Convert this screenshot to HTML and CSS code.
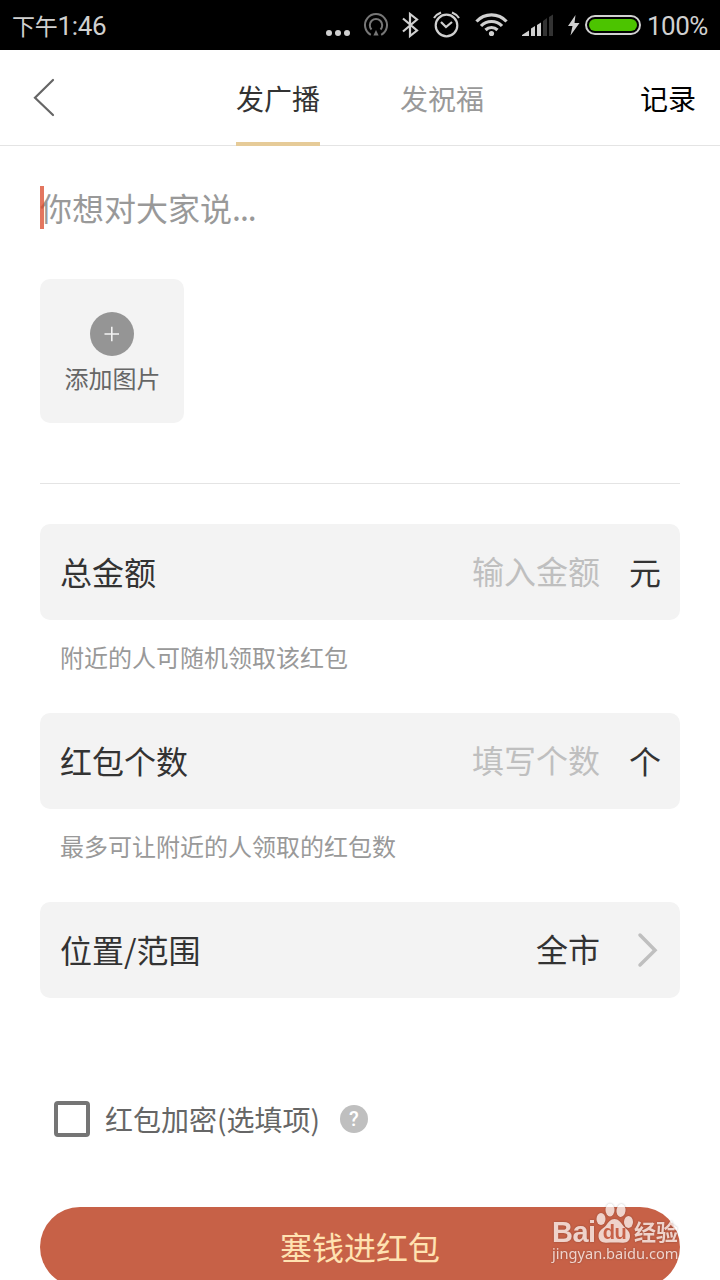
FILE: index.html
```
<!DOCTYPE html>
<html lang="zh-CN">
<head>
    <meta charset="UTF-8">
    <meta name="viewport" content="width=device-width, initial-scale=1.0">
    <title>发广播</title>
    <link rel="stylesheet" href="styles.css">
</head>
<body>
    <div class="status-bar">
        <div class="time"><span class="period">下午</span>1:46</div>
        <svg class="status-icons" width="262" height="50" viewBox="320 0 262 50">
            <g fill="#d0d0d0">
                <circle cx="329" cy="33" r="3"/>
                <circle cx="338" cy="33" r="3"/>
                <circle cx="347" cy="33" r="3"/>
            </g>
            <!-- hotspot -->
            <g fill="none" stroke="#777" stroke-width="2">
                <path d="M370.800 34.800A11 11 0 1 1 381.200 34.800"/>
                <path d="M371.500 29.500A6.200 6.200 0 1 1 380.500 29.500"/>
                <path d="M376 30l2.600 5.500h-5.200z" fill="#777" stroke="none"/>
            </g>
            <!-- bluetooth -->
            <path d="M403 18.500l14 12-7 5.500V14l7 5.500L403 31.500" fill="none" stroke="#d0d0d0" stroke-width="2.200"/>
            <!-- alarm -->
            <g fill="none" stroke="#d0d0d0" stroke-width="2.200">
                <circle cx="446.500" cy="25.500" r="10.800"/>
                <path d="M441 22l5 5 6-5"/>
                <path d="M434 18a15 15 0 0 1 7-5.500M459 18a15 15 0 0 0-7-5.500"/>
            </g>
            <!-- wifi -->
            <g fill="none" stroke="#d0d0d0" stroke-width="3.200">
                <path d="M476.500 21.500a20.500 20.500 0 0 1 30 0"/>
                <path d="M481 26a14.500 14.500 0 0 1 21 0"/>
                <path d="M485.500 30a8.500 8.500 0 0 1 12 0"/>
                <circle cx="491.500" cy="33.500" r="2.600" fill="#d0d0d0" stroke="none"/>
            </g>
            <!-- signal -->
            <path d="M522 36v-1l7-4.500V36zM531 36v-7.500l4-2.500v10zM537 36V25l4-2.500V36z" fill="#d0d0d0"/>
            <path d="M543 36V21l4-3v18zM549 36V17l4-2.500V36z" fill="#333"/>
            <path d="M575.500 15l-7.500 11h4.500l-2 9.500 9-12.500h-5z" fill="#d0d0d0"/>
        </svg>
        <div class="battery"><div class="battery-level"></div></div>
        <div class="percent">100%</div>
    </div>

    <div class="header">
        <svg class="back" width="24" height="40" viewBox="0 0 24 40">
            <path d="M21 2L3 19.700 21 37" fill="none" stroke="#666" stroke-width="2.200" stroke-linecap="round"/>
        </svg>
        <div class="tabs">
            <div class="tab active">发广播</div>
            <div class="tab">发祝福</div>
        </div>
        <div class="record">记录</div>
    </div>

    <div class="content">
        <div class="message-field">
            <span class="placeholder">你想对大家说<span class="dots">...</span></span>
            <span class="cursor"></span>
        </div>

        <div class="add-image">
            <svg width="44" height="44" viewBox="0 0 44 44">
                <circle cx="22" cy="22" r="22" fill="#959595"/>
                <path d="M14.500 22h14.500M21.800 14.700v14.500" stroke="#f3f3f3" stroke-width="1.600"/>
            </svg>
            <span>添加图片</span>
        </div>

        <div class="divider"></div>

        <div class="row">
            <span class="label">总金额</span>
            <span class="value empty">输入金额</span>
            <span class="unit">元</span>
        </div>
        <div class="hint">附近的人可随机领取该红包</div>

        <div class="row">
            <span class="label">红包个数</span>
            <span class="value empty">填写个数</span>
            <span class="unit">个</span>
        </div>
        <div class="hint">最多可让附近的人领取的红包数</div>

        <div class="row">
            <span class="label">位置/范围</span>
            <span class="value">全市</span>
            <svg class="arrow" width="22" height="36" viewBox="0 0 22 36">
                <path d="M3 3l15 15.300L3 33" fill="none" stroke="#bfbfbf" stroke-width="3.500" stroke-linecap="round"/>
            </svg>
        </div>

        <div class="encrypt">
            <span class="checkbox"></span>
            <span class="encrypt-text">红包加密(选填项)</span>
            <span class="help">?</span>
        </div>

        <div class="submit">塞钱进红包</div>
    </div>

    <div class="watermark">
        <div class="brand">
            <span class="bai">Bai</span>
            <svg width="38" height="42" viewBox="0 0 38 42">
                <ellipse cx="5" cy="17" rx="4.500" ry="6"/>
                <ellipse cx="14" cy="8" rx="4.500" ry="6.500"/>
                <ellipse cx="25" cy="8.500" rx="4.500" ry="6.500" transform="rotate(8 25 8.500)"/>
                <ellipse cx="32.500" cy="20" rx="4.500" ry="6"/>
                <path d="M18.500 17c-4 0-6 3-8.500 6.500-3 3.500-7.500 4.500-7.500 10.500 0 4.500 3.500 7 8 6.700 5-.4 11-.4 16 0 5 .3 7.500-2.500 7.500-6.700 0-5.500-4.500-7-7-10.500-2.500-3.500-4.500-6.500-8.500-6.500z"/>
                <text x="18.500" y="37" text-anchor="middle" class="du">du</text>
            </svg>
            <span class="jingyan">经验</span>
        </div>
        <div class="site">jingyan.baidu.com</div>
    </div>
</body>
</html>
```
FILE: styles.css
```
:root {
    --text-color: #333;
    --muted-color: #999;
    --field-bg: #f3f3f3;
    --status-color: #d0d0d0;
    --tab-line: #e6cb98;
    --button-bg: #c76147;
    --button-text: #ffe2b1;
}

* {
    margin: 0;
    padding: 0;
    box-sizing: border-box;
}

body {
    position: relative;
    width: 720px;
    height: 1280px;
    overflow: hidden;
    background-color: #fff;
    color: var(--text-color);
    font-family: 'Noto Sans CJK SC', sans-serif;
}

.status-bar {
    height: 50px;
    padding-left: 12px;
    display: flex;
    align-items: center;
    background-color: #000;
    color: var(--status-color);
    font-family: Roboto, 'Noto Sans CJK SC', sans-serif;
    font-size: 26px;
    white-space: nowrap;
}

.status-bar > * {
    flex: none;
}

.time {
    width: 308px;
    letter-spacing: -0.3px;
}

.period {
    font-size: 23px;
}

.battery {
    width: 56px;
    height: 20px;
    margin-left: 3px;
    padding: 2px;
    border: 2px solid var(--status-color);
    border-radius: 10px;
}

.battery-level {
    height: 12px;
    border-radius: 6px;
    background-color: #4cc400;
}

.percent {
    margin-left: 6px;
    padding-top: 1px;
    letter-spacing: -0.5px;
}

.header {
    height: 96px;
    padding: 0 24px 0 32px;
    display: flex;
    align-items: center;
    border-bottom: 1px solid #e4e4e4;
}

.tabs {
    margin-left: 180px;
    height: 96px;
    display: flex;
    gap: 80px;
}

.tab {
    height: 96px;
    padding-top: 27px;
    font-size: 28px;
    line-height: 42px;
    color: var(--muted-color);
}

.tab.active {
    color: var(--text-color);
    border-bottom: 4px solid var(--tab-line);
}

.record {
    margin-left: auto;
    padding-top: 1px;
    font-size: 28px;
    color: #000;
}

.content {
    padding: 39px 40px 0;
}

.message-field {
    position: relative;
    height: 46px;
    font-size: 32px;
    line-height: 44px;
    color: var(--muted-color);
}

.dots {
    letter-spacing: -1px;
}

.cursor {
    position: absolute;
    left: 0;
    top: 1px;
    width: 4px;
    height: 43px;
    background-color: rgba(218, 72, 42, 0.75);
}

.add-image {
    width: 144px;
    height: 144px;
    margin-top: 48px;
    padding-top: 33px;
    display: flex;
    flex-direction: column;
    align-items: center;
    border-radius: 10px;
    background-color: var(--field-bg);
    color: #666;
    font-size: 24px;
    line-height: 36px;
}

.add-image span {
    margin-top: 4px;
    padding-left: 1px;
}

.divider {
    height: 1px;
    margin: 60px 0 40px;
    background-color: #e4e4e4;
}

.row {
    height: 96px;
    padding: 0 19px 0 20px;
    display: flex;
    align-items: center;
    border-radius: 10px;
    background-color: var(--field-bg);
    font-size: 32px;
    line-height: 46px;
}

.label,
.unit {
    padding-bottom: 2px;
}

.value {
    margin-left: auto;
    padding-bottom: 4px;
}

.value.empty {
    color: #bfbfbf;
}

.unit {
    margin-left: 29px;
}

.arrow {
    margin: 0 2px 0 37px;
}

.hint {
    height: 93px;
    padding: 19px 20px 0;
    font-size: 24px;
    line-height: 36px;
    color: var(--muted-color);
}

.encrypt {
    height: 42px;
    margin-top: 100px;
    padding-left: 14px;
    display: flex;
    align-items: center;
    font-size: 28px;
    line-height: 42px;
    color: #666;
}

.checkbox {
    width: 36px;
    height: 36px;
    margin-right: 15px;
    border: 4px solid #757575;
    border-radius: 4px;
}

.help {
    width: 28px;
    height: 28px;
    margin-left: 20px;
    border-radius: 50%;
    background-color: #bfbfbf;
    color: #fff;
    font: 500 20px/28px Roboto, sans-serif;
    text-align: center;
}

.submit {
    height: 80px;
    margin-top: 67px;
    border-radius: 40px;
    background-color: var(--button-bg);
    color: var(--button-text);
    font-size: 32px;
    line-height: 78px;
    text-align: center;
}

.watermark {
    position: absolute;
    left: 552px;
    top: 1202px;
    width: 130px;
    color: #fff;
    opacity: 0.72;
    filter: drop-shadow(0 0 1px rgba(0, 0, 0, 0.35));
}

.brand {
    height: 42px;
    display: flex;
    align-items: flex-end;
    white-space: nowrap;
}

.brand svg {
    flex: none;
    margin-left: 1px;
    fill: #fff;
}

.bai {
    width: 43px;
    font: bold 29px/24px 'Liberation Sans', sans-serif;
    letter-spacing: -0.5px;
}

.du {
    font: bold 20px 'Liberation Sans', sans-serif;
    letter-spacing: -0.5px;
    fill: var(--button-bg);
}

.jingyan {
    font-size: 22px;
    font-weight: bold;
    line-height: 22px;
    margin-bottom: 3px;
}

.site {
    font: 14.6px/18px 'Noto Sans', sans-serif;
    white-space: nowrap;
}
```
